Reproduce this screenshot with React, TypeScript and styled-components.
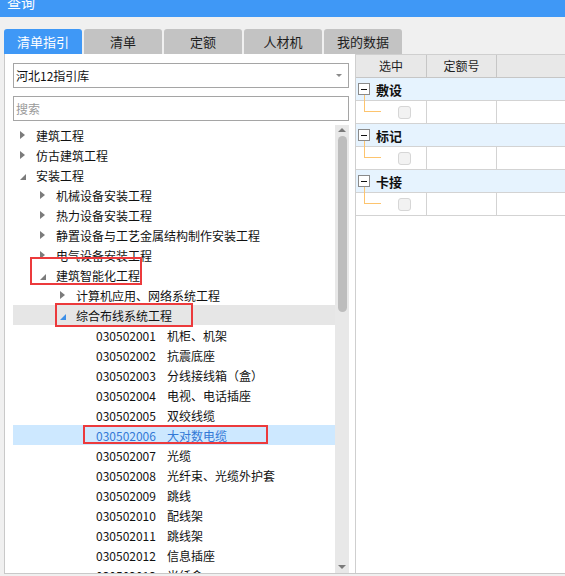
import React from 'react'
import styled, { createGlobalStyle } from 'styled-components'

const GlobalStyle = createGlobalStyle`
  html, body {
    margin: 0;
    padding: 0;
    background: #f0f0f0;
  }
  body {
    font-family: 'Noto Sans CJK SC', 'Microsoft YaHei', 'Noto Sans', sans-serif;
    color: #1a1a1a;
  }
`

const BLUE = '#3f98f6'

const Window = styled.div`
  width: 565px;
  height: 576px;
  overflow: hidden;
  background: #f0f0f0;
  display: flex;
  flex-direction: column;
`

const TitleBar = styled.div`
  height: 17px;
  flex: none;
  background: ${BLUE};
  overflow: hidden;
  padding-left: 7px;
`

const TitleText = styled.div`
  color: #fff;
  font-size: 14px;
  line-height: 14px;
  margin-top: -5px;
`

const TabBar = styled.div`
  display: flex;
  gap: 2px;
  margin-top: 12px;
  padding-left: 4px;
  height: 25px;
  flex: none;
`

const Tab = styled.div<{ $active?: boolean }>`
  width: 78px;
  height: 25px;
  border-radius: 3px 3px 0 0;
  background: ${(p) => (p.$active ? BLUE : '#c3c3c3')};
  color: ${(p) => (p.$active ? '#fff' : '#1e1e1e')};
  font-size: 13px;
  line-height: 25px;
  text-align: center;
`

const Body = styled.div`
  display: flex;
  margin-left: 4px;
  height: 519px;
  flex: none;
  border-left: 1px solid #c9c9c9;
  border-bottom: 1px solid #c9c9c9;
`

const LeftPane = styled.div`
  width: 351px;
  flex: none;
  background: #fff;
  border-right: 1px solid #cfcfcf;
  display: flex;
  flex-direction: column;
  padding: 9px 6px 0 8px;
  box-sizing: border-box;
`

const Field = styled.div`
  height: 25px;
  flex: none;
  box-sizing: border-box;
  border: 1px solid #a5a5a5;
  display: flex;
  align-items: center;
  justify-content: space-between;
  padding: 0 6px 0 2px;
  font-size: 12px;
  color: #111;
`

const Placeholder = styled.span`
  color: #9a9a9a;
`

const SearchField = styled(Field)`
  margin-top: 8px;
`

const TreeArea = styled.div`
  flex: 1;
  margin-top: 4px;
  display: flex;
  min-height: 0;
`

const TreeList = styled.div`
  flex: 1;
  overflow: hidden;
`

const Row = styled.div<{ $depth: number; $tone?: 'hover' | 'selected' }>`
  position: relative;
  height: 20px;
  display: flex;
  align-items: center;
  padding-left: ${(p) => 7 + p.$depth * 20}px;
  font-size: 12px;
  white-space: nowrap;
  background: ${(p) => (p.$tone === 'hover' ? '#e6e6e6' : p.$tone === 'selected' ? '#cde8ff' : 'transparent')};
  color: ${(p) => (p.$tone === 'selected' ? '#3379d6' : '#111')};
`

const Toggle = styled.span`
  width: 16px;
  flex: none;
  display: flex;
  align-items: center;
`

const Code = styled.span`
  width: 71px;
  flex: none;
`

const Mark = styled.div`
  position: absolute;
  border: 2px solid #ec3a3c;
  box-sizing: border-box;
  pointer-events: none;
`

const ScrollTrack = styled.div`
  width: 14px;
  flex: none;
  background: #e8e8e8;
  display: flex;
  flex-direction: column;
  align-items: center;
  padding: 3px 0 4px;
  box-sizing: border-box;
`

const Thumb = styled.div`
  width: 9px;
  height: 176px;
  margin-top: 4px;
  border-radius: 5px;
  background: #bdbdbd;
`

const Spacer = styled.div`
  flex: 1;
`

const RightPane = styled.div`
  flex: 1;
  background: #fff;
  border-top: 1px solid #cfcfcf;
  display: flex;
  flex-direction: column;
  min-width: 0;
`

const GridRow = styled.div<{ $kind: 'head' | 'group' | 'item' }>`
  position: relative;
  height: 23px;
  flex: none;
  box-sizing: border-box;
  display: flex;
  border-bottom: 1px solid ${(p) => (p.$kind === 'head' ? '#c6c6c6' : '#d3d3d3')};
  background: ${(p) => (p.$kind === 'head' ? '#e8e8e8' : p.$kind === 'group' ? '#e6f3fe' : '#fff')};
  align-items: ${(p) => (p.$kind === 'group' ? 'center' : 'stretch')};
`

const Cell = styled.div<{ $w?: number; $head?: boolean }>`
  width: ${(p) => (p.$w ? `${p.$w}px` : 'auto')};
  flex: ${(p) => (p.$w ? 'none' : '1')};
  box-sizing: border-box;
  border-right: 1px solid ${(p) => (p.$head ? '#c6c6c6' : '#d3d3d3')};
  font-size: 12px;
  line-height: 22px;
  text-align: center;
  color: #1e1e1e;
  &:last-child {
    border-right: none;
  }
`

const CheckCell = styled(Cell)`
  display: flex;
  align-items: center;
  padding-left: 42px;
`

const Box = styled.span`
  width: 13px;
  height: 13px;
  box-sizing: border-box;
  border: 1px solid #d6d6d6;
  border-radius: 3px;
  background: #f2f2f2;
`

const Connector = styled.span`
  position: absolute;
  left: 8px;
  top: -6px;
  width: 17px;
  height: 17px;
  box-sizing: border-box;
  border-left: 1px solid #fdc46e;
  border-bottom: 1px solid #fdc46e;
`

const Minus = styled.span`
  width: 12px;
  height: 12px;
  margin: 0 6px 0 2px;
  box-sizing: border-box;
  border: 1px solid #8a8a8a;
  background: #fff;
  display: flex;
  align-items: center;
  justify-content: center;
  &::after {
    content: '';
    width: 6px;
    height: 1px;
    background: #111;
  }
`

const GroupLabel = styled.span`
  font-size: 13px;
  font-weight: 700;
  color: #111;
`

const Collapsed = () => (
  <svg width='5' height='8' viewBox='0 0 5 8'>
    <path d='M0 0 L5 4 L0 8 Z' fill='#7b7b7b' />
  </svg>
)

const Expanded = ({ color = '#7b7b7b' }: { color?: string }) => (
  <svg width='6' height='6' viewBox='0 0 6 6' style={{ marginTop: 3 }}>
    <path d='M6 0 L6 6 L0 6 Z' fill={color} />
  </svg>
)

const Arrow = ({ up, light }: { up?: boolean; light?: boolean }) => (
  <svg width={light ? 6 : 8} height={light ? 3 : 4} viewBox='0 0 8 4'>
    <path d={up ? 'M0 4 L4 0 L8 4 Z' : 'M0 0 L8 0 L4 4 Z'} fill={light ? '#8a8a8a' : '#7a7a7a'} />
  </svg>
)

type Node = {
  depth: number
  label: string
  code?: string
  state?: 'open' | 'closed'
  tone?: 'hover' | 'selected'
  mark?: { left: number; top: number; width: number; height: number }
}

const NODES: Node[] = [
  { depth: 0, label: '建筑工程', state: 'closed' },
  { depth: 0, label: '仿古建筑工程', state: 'closed' },
  { depth: 0, label: '安装工程', state: 'open' },
  { depth: 1, label: '机械设备安装工程', state: 'closed' },
  { depth: 1, label: '热力设备安装工程', state: 'closed' },
  { depth: 1, label: '静置设备与工艺金属结构制作安装工程', state: 'closed' },
  { depth: 1, label: '电气设备安装工程', state: 'closed' },
  { depth: 1, label: '建筑智能化工程', state: 'open', mark: { left: 17, top: -8, width: 112, height: 28 } },
  { depth: 2, label: '计算机应用、网络系统工程', state: 'closed' },
  { depth: 2, label: '综合布线系统工程', state: 'open', tone: 'hover', mark: { left: 42, top: -2, width: 138, height: 24 } },
  { depth: 3, code: '030502001', label: '机柜、机架' },
  { depth: 3, code: '030502002', label: '抗震底座' },
  { depth: 3, code: '030502003', label: '分线接线箱（盒）' },
  { depth: 3, code: '030502004', label: '电视、电话插座' },
  { depth: 3, code: '030502005', label: '双绞线缆' },
  { depth: 3, code: '030502006', label: '大对数电缆', tone: 'selected', mark: { left: 70, top: 0, width: 185, height: 19 } },
  { depth: 3, code: '030502007', label: '光缆' },
  { depth: 3, code: '030502008', label: '光纤束、光缆外护套' },
  { depth: 3, code: '030502009', label: '跳线' },
  { depth: 3, code: '030502010', label: '配线架' },
  { depth: 3, code: '030502011', label: '跳线架' },
  { depth: 3, code: '030502012', label: '信息插座' },
  { depth: 3, code: '030502013', label: '光纤盒' },
]

const TABS = ['清单指引', '清单', '定额', '人材机', '我的数据']
const GROUPS = ['敷设', '标记', '卡接']

export default function App() {
  return (
    <Window>
      <GlobalStyle />
      <TitleBar>
        <TitleText>查询</TitleText>
      </TitleBar>

      <TabBar>
        {TABS.map((t, i) => (
          <Tab key={t} $active={i === 0}>
            {t}
          </Tab>
        ))}
      </TabBar>

      <Body>
        <LeftPane>
          <Field>
            <span>河北12指引库</span>
            <Arrow light />
          </Field>
          <SearchField>
            <Placeholder>搜索</Placeholder>
          </SearchField>

          <TreeArea>
            <TreeList>
              {NODES.map((n) => (
                <Row key={n.code ?? n.label} $depth={n.depth} $tone={n.tone}>
                  <Toggle>
                    {n.state === 'closed' && <Collapsed />}
                    {n.state === 'open' && <Expanded color={n.tone === 'hover' ? '#3d8fe8' : undefined} />}
                  </Toggle>
                  {n.code && <Code>{n.code}</Code>}
                  <span>{n.label}</span>
                  {n.mark && <Mark style={n.mark} />}
                </Row>
              ))}
            </TreeList>
            <ScrollTrack>
              <Arrow up />
              <Thumb />
              <Spacer />
              <Arrow />
            </ScrollTrack>
          </TreeArea>
        </LeftPane>

        <RightPane>
          <GridRow $kind='head'>
            <Cell $w={71} $head>选中</Cell>
            <Cell $w={70} $head>定额号</Cell>
            <Cell $head />
          </GridRow>
          {GROUPS.map((g) => (
            <React.Fragment key={g}>
              <GridRow $kind='group'>
                <Minus />
                <GroupLabel>{g}</GroupLabel>
              </GridRow>
              <GridRow $kind='item'>
                <Connector />
                <CheckCell $w={71}>
                  <Box />
                </CheckCell>
                <Cell $w={70} />
                <Cell />
              </GridRow>
            </React.Fragment>
          ))}
        </RightPane>
      </Body>
    </Window>
  )
}
